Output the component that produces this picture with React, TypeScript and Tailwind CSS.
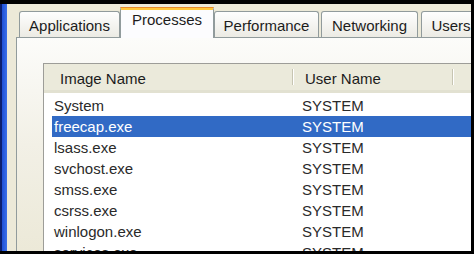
const tabs = [
  { label: 'Applications', w: 'w-[101px]', gap: '' },
  { label: 'Processes', w: 'w-[94px]', gap: '', active: true },
  { label: 'Performance', w: 'w-[105px]', gap: '' },
  { label: 'Networking', w: 'w-[97px]', gap: 'ml-[2px]' },
  { label: 'Users', w: 'w-[60px]', gap: 'ml-[3px]' },
];

const processes = [
  { name: 'System', user: 'SYSTEM' },
  { name: 'freecap.exe', user: 'SYSTEM', selected: true },
  { name: 'lsass.exe', user: 'SYSTEM' },
  { name: 'svchost.exe', user: 'SYSTEM' },
  { name: 'smss.exe', user: 'SYSTEM' },
  { name: 'csrss.exe', user: 'SYSTEM' },
  { name: 'winlogon.exe', user: 'SYSTEM' },
  { name: 'services.exe', user: 'SYSTEM' },
];

function Tab({ label, w, gap, active }: { label: string; w: string; gap: string; active?: boolean }) {
  if (active) {
    return (
      <div className={`relative z-10 -mb-px shrink-0 ${w} h-[31px] rounded-t-[3px] border-x border-[#919b9c] bg-[#fcfcfe] flex flex-col`}>
        <div className="h-[1px] bg-[#e68b2c] rounded-t-[3px] -mx-px" />
        <div className="h-[2px] bg-[#ffc73c]" />
        <div className="flex-1 flex items-start justify-center pt-[2px] text-[#1c1c1c]">{label}</div>
      </div>
    );
  }
  return (
    <div
      className={`shrink-0 ${w} ${gap} h-[26px] rounded-t-[3px] border border-b-0 border-[#919b9c] bg-gradient-to-b from-[#fefefe] to-[#ecebe4] flex items-center justify-center pt-[1px] text-[#1c1c1c]`}
    >
      {label}
    </div>
  );
}

export default function App() {
  return (
    <div
      className="w-[474px] h-[254px] overflow-hidden bg-black pt-[4px] pr-[3px] pb-[3px] flex text-[15px] leading-none"
      style={{ fontFamily: '"Liberation Sans", Arial, sans-serif' }}
    >
      <div className="w-[2px] shrink-0 bg-[#0a1e6e]" />
      <div className="w-[5px] shrink-0 bg-gradient-to-r from-[#1d4fd6] to-[#3a6ee8]" />
      <div className="flex-1 min-w-0 bg-[#ece9d8] flex flex-col overflow-hidden">
        <div className="h-[33px] shrink-0 flex items-end pl-[12px]">
          {tabs.map(t => (
            <Tab key={t.label} {...t} />
          ))}
        </div>
        <div className="flex-1 min-h-0 ml-[9px] border-t border-l border-[#919b9c] bg-gradient-to-b from-[#fcfcfa] via-[#f2f0e6] to-[#ece9d8] pl-[26px] pt-[25px] overflow-hidden">
          <div className="h-full border-t border-l border-[#9d9d98] bg-white overflow-hidden">
            <div className="h-[29px] flex items-stretch bg-[#ebeadb] border-b-[3px] border-[#e2e1d1] text-[#1c1c1c]">
              <div className="w-[248px] shrink-0 flex items-center pl-[16px] pt-[2px]">Image Name</div>
              <div className="w-px my-[5px] bg-[#c7c5b2]" />
              <div className="w-px my-[5px] bg-white" />
              <div className="w-[158px] shrink-0 flex items-center pl-[11px] pt-[2px]">User Name</div>
              <div className="w-px my-[5px] bg-[#c7c5b2]" />
              <div className="w-px my-[5px] bg-white" />
              <div className="flex-1" />
            </div>
            <div className="pt-[2px] pl-[8px]">
              {processes.map(p => (
                <div
                  key={p.name}
                  className={`h-[21px] flex items-center pl-[2px] ${p.selected ? 'bg-[#316ac5] text-white' : 'text-[#2a2a2a]'}`}
                >
                  <span className="w-[248px] shrink-0">{p.name}</span>
                  <span>{p.user}</span>
                </div>
              ))}
            </div>
          </div>
        </div>
      </div>
    </div>
  );
}
